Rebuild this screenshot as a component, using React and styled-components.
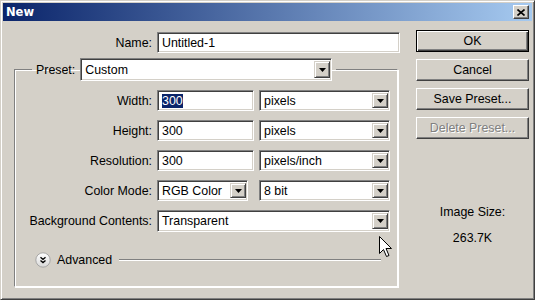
import React from "react";
import styled, { createGlobalStyle } from "styled-components";

const GlobalStyle = createGlobalStyle`
  html, body { margin: 0; padding: 0; }
  body {
    width: 535px;
    height: 300px;
    overflow: hidden;
    background: #d4d0c8;
    font-family: "Liberation Sans", Arial, sans-serif;
    font-size: 12.4px;
    color: #000;
  }
`;

const Window = styled.div`
  position: relative;
  box-sizing: border-box;
  width: 535px;
  height: 300px;
  background: #d4d0c8;
  border: 1px solid;
  border-color: #d4d0c8 #404040 #404040 #d4d0c8;
  box-shadow: inset 1px 1px #fff, inset -1px -1px #808080;
  padding: 2px;
  display: flex;
  flex-direction: column;
`;

const TitleBar = styled.div`
  height: 18px;
  display: flex;
  align-items: center;
  justify-content: space-between;
  padding: 0 3px 0 3px;
  background: linear-gradient(to right, #0a246a, #a6caf0);
  color: #fff;
  font-family: "DejaVu Sans", Verdana, sans-serif;
  font-weight: bold;
  font-size: 11.5px;
`;

const CloseButton = styled.div`
  box-sizing: border-box;
  width: 16px;
  height: 14px;
  display: flex;
  align-items: center;
  justify-content: center;
  background: #d4d0c8;
  border: 1px solid;
  border-color: #fff #404040 #404040 #fff;
  box-shadow: inset -1px -1px #808080;
`;

const Body = styled.div`
  display: flex;
  padding: 11px 0 0 11px;
  gap: 16px;
`;

const FormColumn = styled.div`
  width: 386px;
  display: flex;
  flex-direction: column;
`;

const Row = styled.div`
  display: grid;
  grid-template-columns: ${(p) => p.$label}px 1fr;
  column-gap: 5px;
  align-items: center;
  height: 21px;
`;

const Label = styled.span`
  text-align: right;
  white-space: nowrap;
`;

const Controls = styled.div`
  display: grid;
  grid-template-columns: 97px 131px;
  column-gap: 5px;
  align-items: center;
`;

const Field = styled.div`
  box-sizing: border-box;
  width: ${(p) => (p.$w ? `${p.$w}px` : "100%")};
  height: ${(p) => p.$h || 21}px;
  display: flex;
  align-items: center;
  padding: 0 2px 0 4px;
  background: #fff;
  border: 1px solid;
  border-color: #808080 #fff #fff #808080;
  box-shadow: inset 1px 1px #404040, inset -1px -1px #d4d0c8;
  white-space: nowrap;
  grid-column: ${(p) => (p.$span ? "1 / -1" : "auto")};
`;

const Selected = styled.span`
  background: #0a246a;
  color: #fff;
`;

const SelectText = styled.span`
  flex: 1;
`;

const DropButton = styled.div`
  box-sizing: border-box;
  width: 16px;
  height: calc(100% - 4px);
  display: flex;
  align-items: center;
  justify-content: center;
  background: #d4d0c8;
  border: 1px solid;
  border-color: #d4d0c8 #404040 #404040 #d4d0c8;
  box-shadow: inset 1px 1px #fff, inset -1px -1px #808080;
  margin-right: -1px;
`;

const Group = styled.fieldset`
  box-sizing: border-box;
  margin: 5px 0 0 0;
  padding: 9px 0 18px 0;
  width: 384px;
  border-style: solid;
  border-width: 1px;
  border-color: #808080 #fff #fff #808080;
  box-shadow: inset 1px 1px #fff, 1px 1px #fff;
`;

const Legend = styled.legend`
  margin-left: 17px;
  padding: 0 4px;
  display: flex;
  align-items: center;
  gap: 5px;
`;

const GroupRows = styled.div`
  display: flex;
  flex-direction: column;
  gap: 9px;
`;

const AdvancedRow = styled.div`
  display: flex;
  align-items: center;
  gap: 6px;
  height: 16px;
  margin: 21px 16px 0 20px;
`;

const Rule = styled.div`
  flex: 1;
  height: 1px;
  background: #808080;
  border-bottom: 1px solid #fff;
  margin-left: 1px;
`;

const ButtonColumn = styled.div`
  width: 113px;
  display: flex;
  flex-direction: column;
  align-items: stretch;
  gap: 7px;
  margin-top: -2px;
`;

const Button = styled.div`
  box-sizing: border-box;
  height: 22px;
  display: flex;
  align-items: center;
  justify-content: center;
  background: #d4d0c8;
  border: 1px solid;
  border-color: ${(p) => (p.$default ? "#000" : "#fff #404040 #404040 #fff")};
  box-shadow: ${(p) =>
    p.$default
      ? "inset 1px 1px #fff, inset -1px -1px #404040, inset -2px -2px #808080"
      : "inset -1px -1px #808080"};
  color: ${(p) => (p.$disabled ? "#808080" : "#000")};
  text-shadow: ${(p) => (p.$disabled ? "1px 1px #fff" : "none")};
`;

const SizeInfo = styled.div`
  margin-top: 59px;
  display: flex;
  flex-direction: column;
  align-items: center;
  gap: 12px;
`;

const Cursor = styled.svg`
  position: absolute;
  left: 378px;
  top: 235px;
`;

const Arrow = () => (
  <svg width="7" height="4" viewBox="0 0 7 4">
    <path d="M0 0H7L3.5 4Z" fill="#000" />
  </svg>
);

const Select = ({ value, w, h, span }) => (
  <Field $w={w} $h={h} $span={span}>
    <SelectText>{value}</SelectText>
    <DropButton>
      <Arrow />
    </DropButton>
  </Field>
);

const AdvancedIcon = () => (
  <svg width="16" height="16" viewBox="0 0 16 16">
    <defs>
      <linearGradient id="adv" x1="0" y1="0" x2="0" y2="1">
        <stop offset="0" stopColor="#ffffff" />
        <stop offset="1" stopColor="#d8d8d8" />
      </linearGradient>
    </defs>
    <circle cx="8" cy="8" r="7.2" fill="url(#adv)" stroke="#a0a0a0" strokeWidth="0.9" />
    <path d="M5.5 5.2L8 7.4L10.5 5.2M5.5 8.4L8 10.6L10.5 8.4" fill="none" stroke="#000" strokeWidth="1.3" />
  </svg>
);

export default function App() {
  return (
    <>
      <GlobalStyle />
      <Window>
        <TitleBar>
          <span>New</span>
          <CloseButton>
            <svg width="8" height="7" viewBox="0 0 8 7">
              <path d="M0.5 0.5L7.5 6.5M7.5 0.5L0.5 6.5" stroke="#000" strokeWidth="1.6" />
            </svg>
          </CloseButton>
        </TitleBar>
        <Body>
          <FormColumn>
            <Row $label={138}>
              <Label>Name:</Label>
              <Field>Untitled-1</Field>
            </Row>
            <Group>
              <Legend>
                <Label>Preset:</Label>
                <Select value="Custom" w={252} h={23} />
              </Legend>
              <GroupRows>
                <Row $label={137}>
                  <Label>Width:</Label>
                  <Controls>
                    <Field>
                      <Selected>300</Selected>
                    </Field>
                    <Select value="pixels" />
                  </Controls>
                </Row>
                <Row $label={137}>
                  <Label>Height:</Label>
                  <Controls>
                    <Field>300</Field>
                    <Select value="pixels" />
                  </Controls>
                </Row>
                <Row $label={137}>
                  <Label>Resolution:</Label>
                  <Controls>
                    <Field>300</Field>
                    <Select value="pixels/inch" />
                  </Controls>
                </Row>
                <Row $label={137}>
                  <Label>Color Mode:</Label>
                  <Controls>
                    <Select value="RGB Color" w={91} />
                    <Select value="8 bit" />
                  </Controls>
                </Row>
                <Row $label={137}>
                  <Label>Background Contents:</Label>
                  <Controls>
                    <Select value="Transparent" h={22} span />
                  </Controls>
                </Row>
              </GroupRows>
              <AdvancedRow>
                <AdvancedIcon />
                <span>Advanced</span>
                <Rule />
              </AdvancedRow>
            </Group>
          </FormColumn>
          <ButtonColumn>
            <Button $default>OK</Button>
            <Button>Cancel</Button>
            <Button>Save Preset...</Button>
            <Button $disabled>Delete Preset...</Button>
            <SizeInfo>
              <span>Image Size:</span>
              <span>263.7K</span>
            </SizeInfo>
          </ButtonColumn>
        </Body>
        <Cursor width="13" height="22" viewBox="0 0 13 22">
          <path
            d="M0.5 0.5V17.5L4.5 13.5L7.5 20.5L10 19.5L7 12.5H12.5Z"
            fill="#fff"
            stroke="#000"
            strokeWidth="1"
            strokeLinejoin="miter"
          />
        </Cursor>
      </Window>
    </>
  );
}
